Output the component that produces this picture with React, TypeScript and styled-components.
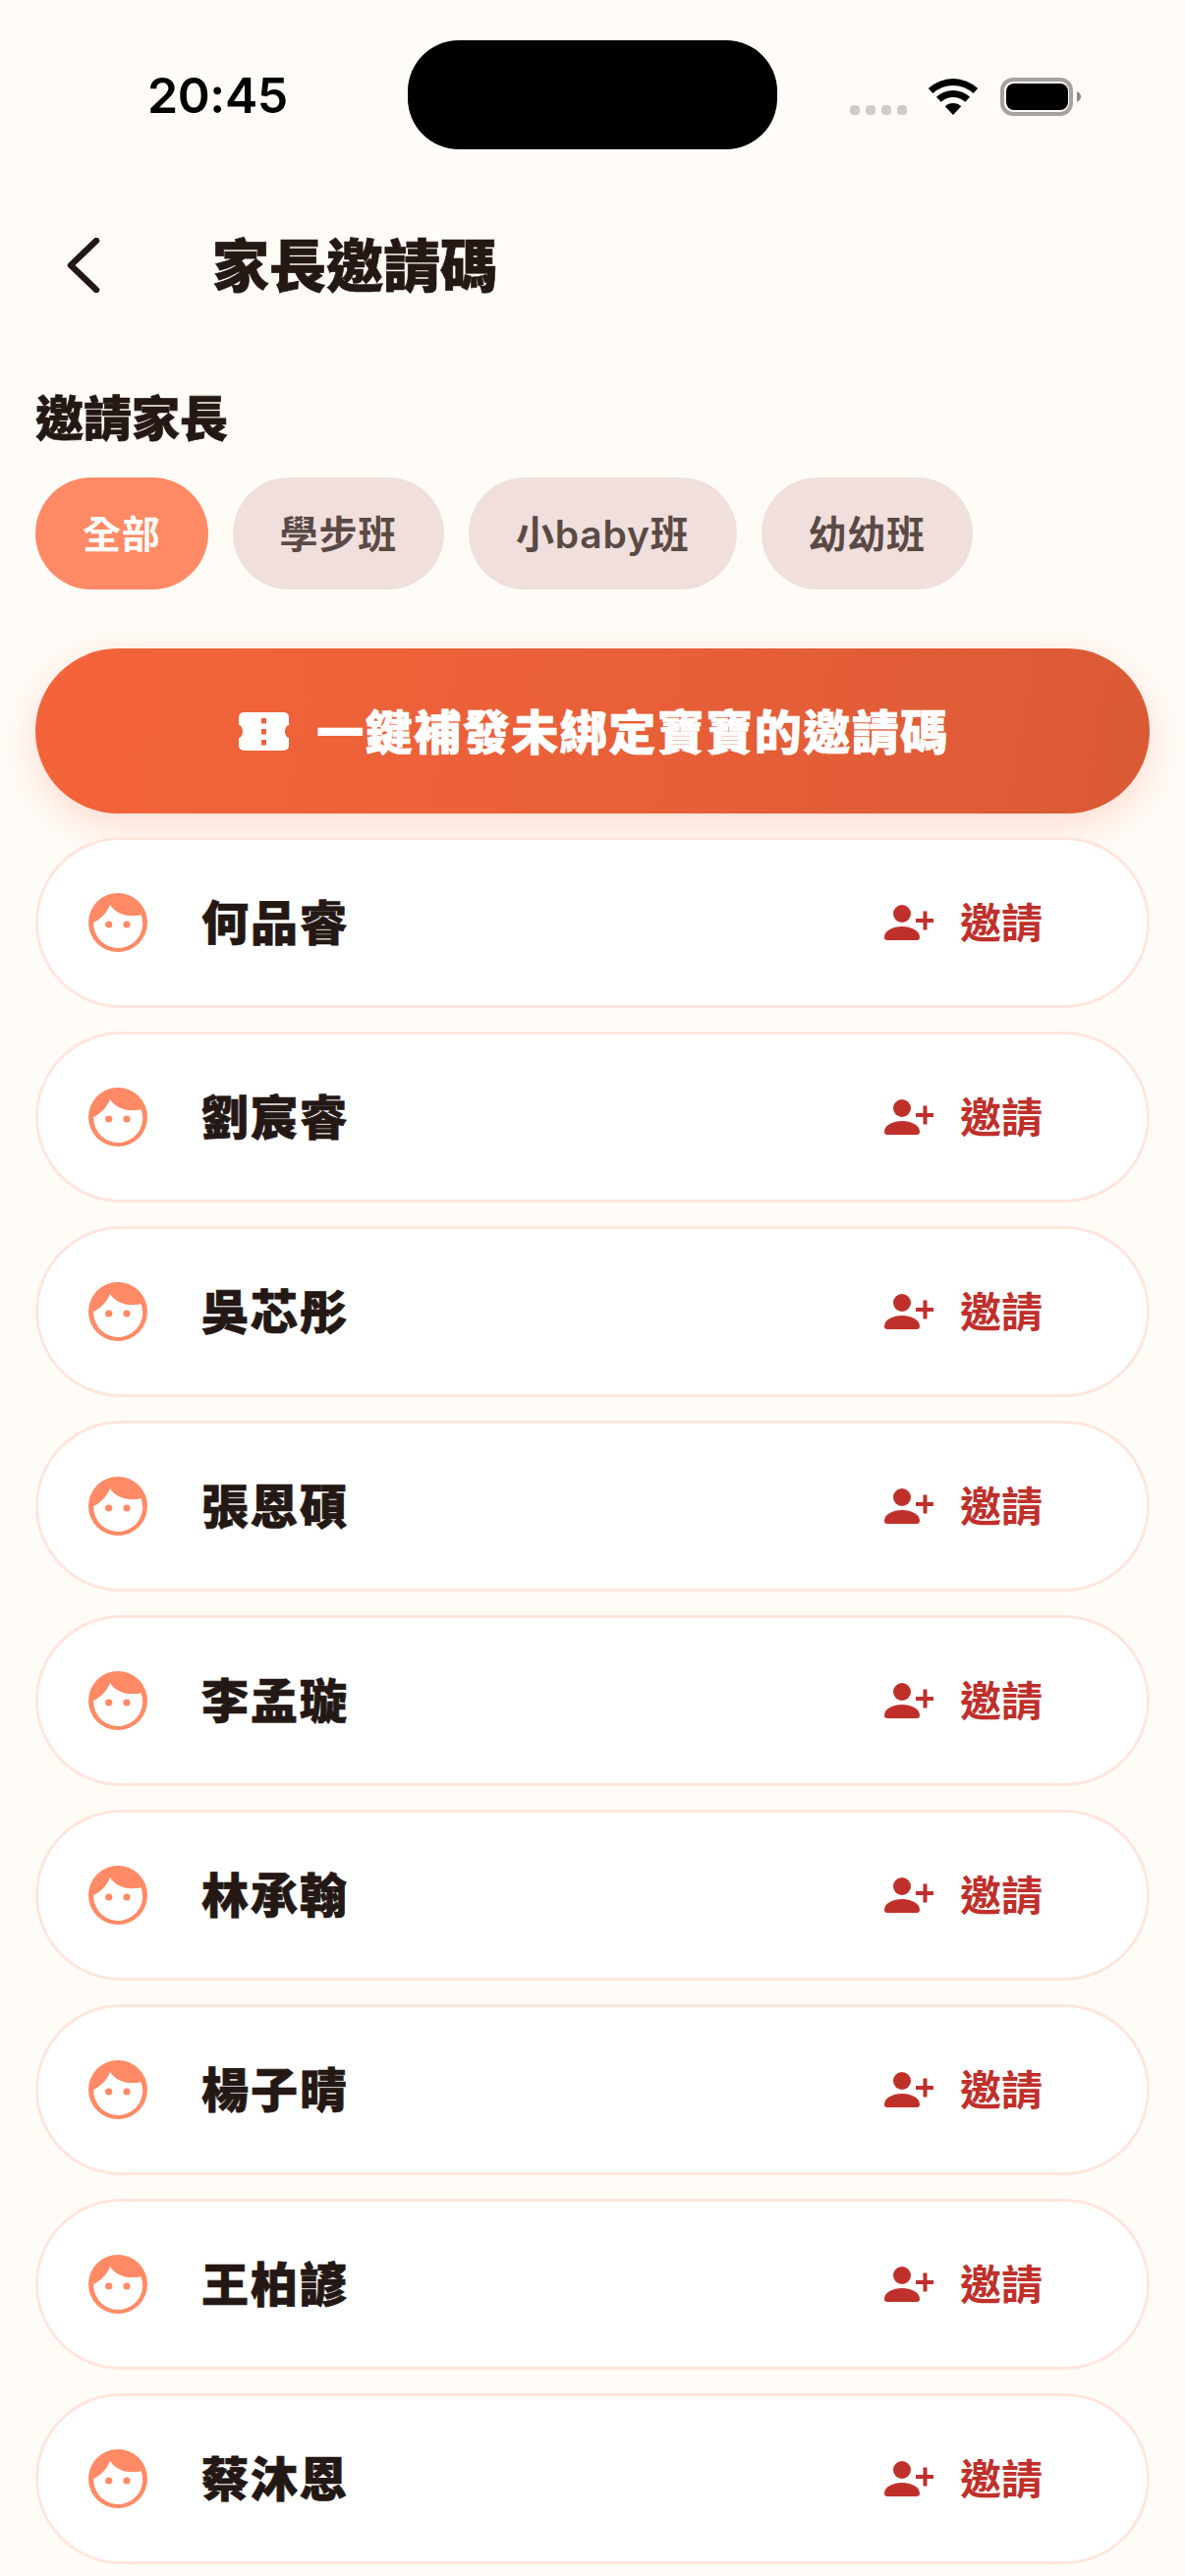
import React from "react";
import styled, { createGlobalStyle } from "styled-components";

const GlobalStyle = createGlobalStyle`
  html, body { margin: 0; padding: 0; background: #fffcf8; }
  body { font-family: Inter, "Noto Sans CJK TC", sans-serif; }
`;

const Page = styled.div`
  width: 1206px;
  height: 2622px;
  overflow: hidden;
  background: #fffcf8;
  box-sizing: border-box;
`;

const StatusBar = styled.div`
  display: grid;
  grid-template-columns: 265px 376px 1fr;
  align-items: center;
  height: 111px;
  padding: 41px 0 0 150px;
`;

const Time = styled.div`
  font-family: Inter, sans-serif;
  font-size: 50px;
  font-weight: 600;
  letter-spacing: -0.4px;
  line-height: 60px;
  color: #000;
`;

const Island = styled.div`
  height: 111px;
  border-radius: 52px;
  background: #000;
`;

const StatusIcons = styled.div`
  display: flex;
  align-items: flex-end;
  margin-left: 74px;
  height: 39px;
  margin-top: 3px;
`;

const Signal = styled.div`
  display: flex;
  gap: 6px;
  margin: 0 22px 1px 0;
`;

const SignalDot = styled.span`
  width: 10px;
  height: 10px;
  border-radius: 4px;
  background: #cfcbc8;
`;

const Wifi = styled.svg`
  width: 50px;
  height: 37px;
  margin: 0 23px 1px 0;
`;

const Battery = styled.svg`
  width: 82px;
  height: 39px;
`;

const Header = styled.div`
  display: flex;
  align-items: center;
  height: 236px;
  padding-left: 66px;
`;

const BackIcon = styled.svg`
  width: 36px;
  height: 56px;
`;

const Title = styled.h1`
  margin: 0 0 0 114px;
  padding-bottom: 6px;
  font-family: "Noto Sans CJK TC", sans-serif;
  font-size: 58px;
  font-weight: 900;
  line-height: 70px;
  -webkit-text-stroke: 0.7px currentColor;
  color: #241815;
`;

const Content = styled.div`
  padding: 0 36px;
`;

const SectionLabel = styled.h2`
  margin: 0 0 28px;
  font-family: "Noto Sans CJK TC", sans-serif;
  font-size: 49px;
  font-weight: 900;
  line-height: 70px;
  -webkit-text-stroke: 0.7px currentColor;
  color: #241815;
`;

const ChipRow = styled.div`
  display: flex;
  gap: 25px;
  margin-bottom: 60px;
`;

const Chip = styled.div<{ $active?: boolean }>`
  display: flex;
  align-items: center;
  box-sizing: border-box;
  height: 114px;
  padding: 0 48px 5px;
  border-radius: 57px;
  font-family: Inter, "Noto Sans CJK TC", sans-serif;
  font-size: 39px;
  font-weight: 600;
  letter-spacing: 0.8px;
  background: ${(p) => (p.$active ? "#ff8a65" : "#f0dfdc")};
  color: ${(p) => (p.$active ? "#ffffff" : "#5a4a46")};
`;

const PrimaryButton = styled.div`
  display: flex;
  align-items: center;
  justify-content: center;
  gap: 28px;
  height: 168px;
  padding-left: 3px;
  margin-bottom: 24px;
  border-radius: 84px;
  background: linear-gradient(100deg, #f4643a 0%, #e85f38 55%, #d95a35 100%);
  box-shadow: 0 12px 40px rgba(244, 100, 58, 0.22);
  font-family: "Noto Sans CJK TC", sans-serif;
  font-size: 48px;
  font-weight: 900;
  letter-spacing: 1.5px;
  -webkit-text-stroke: 0.7px currentColor;
  color: #fff;
`;

const ButtonLabel = styled.span`
  padding-bottom: 5px;
`;

const TicketIcon = styled.svg`
  width: 51px;
  height: 39px;
  flex: none;
`;

const StudentList = styled.div`
  display: flex;
  flex-direction: column;
  gap: 24px;
`;

const StudentCard = styled.div`
  display: flex;
  align-items: center;
  box-sizing: border-box;
  height: 174px;
  padding: 0 106px 0 51px;
  border: 3px solid #ffe6dc;
  border-radius: 87px;
  background: #fff;
`;

const Avatar = styled.svg`
  width: 60px;
  height: 60px;
  flex: none;
`;

const StudentName = styled.div`
  flex: 1;
  margin-left: 55px;
  padding-bottom: 6px;
  font-family: "Noto Sans CJK TC", sans-serif;
  font-size: 48px;
  font-weight: 900;
  letter-spacing: 2px;
  line-height: 60px;
  -webkit-text-stroke: 0.7px currentColor;
  color: #241815;
`;

const InviteAction = styled.div`
  display: flex;
  align-items: center;
  gap: 27px;
  font-family: "Noto Sans CJK TC", sans-serif;
  font-size: 42px;
  font-weight: 600;
  color: #c0302b;
`;

const InviteLabel = styled.span`
  padding-bottom: 6px;
`;

const PersonAdd = styled.svg`
  width: 50px;
  height: 36px;
`;

const students = ["何品睿", "劉宸睿", "吳芯彤", "張恩碩", "李孟璇", "林承翰", "楊子晴", "王柏諺", "蔡沐恩"];
const classes = ["全部", "學步班", "小baby班", "幼幼班"];

export default function App() {
  return (
    <Page>
      <GlobalStyle />
      <StatusBar>
        <Time>20:45</Time>
        <Island />
        <StatusIcons>
          <Signal>
            <SignalDot />
            <SignalDot />
            <SignalDot />
            <SignalDot />
          </Signal>
          <Wifi viewBox="0 0 50 37">
            <path d="M-0.2 10 A37 37 0 0 1 50.2 10 L45.5 15.1 A30 30 0 0 0 4.5 15.1 Z" fill="#000" />
            <path d="M7.95 18.7 A25 25 0 0 1 42.05 18.7 L37.3 23.8 A18 18 0 0 0 12.7 23.8 Z" fill="#000" />
            <path d="M16.8 28.2 A12 12 0 0 1 33.2 28.2 L25 37 Z" fill="#000" />
          </Wifi>
          <Battery viewBox="0 0 82 39">
            <rect x="2" y="2" width="70" height="35" rx="11" fill="none" stroke="#a8a19e" strokeWidth="4" />
            <rect x="6" y="6" width="63" height="27" rx="8" fill="#000" />
            <path d="M78 14 C81 15.5 82 17.5 82 19.5 C82 21.5 81 23.5 78 25 Z" fill="#8f8986" />
          </Battery>
        </StatusIcons>
      </StatusBar>

      <Header>
        <BackIcon viewBox="0 0 36 56">
          <path d="M32 3 L6 28 L32 53" fill="none" stroke="#241815" strokeWidth="6.5" strokeLinecap="round" strokeLinejoin="round" />
        </BackIcon>
        <Title>家長邀請碼</Title>
      </Header>

      <Content>
        <SectionLabel>邀請家長</SectionLabel>
        <ChipRow>
          {classes.map((c, i) => (
            <Chip key={c} $active={i === 0}>
              {c}
            </Chip>
          ))}
        </ChipRow>

        <PrimaryButton>
          <TicketIcon viewBox="0 0 51 39">
            <path
              fillRule="evenodd"
              fill="#fff"
              d="M5 0 H46 a5 5 0 0 1 5 5 V13 a4 6.5 0 0 0 0 13 V34 a5 5 0 0 1 -5 5 H5 a5 5 0 0 1 -5 -5 V26 a4 6.5 0 0 0 0 -13 V5 a5 5 0 0 1 5 -5 Z M23 6 v5.5 h5 v-5.5 Z M23 17 v5.5 h5 v-5.5 Z M23 28 v5.5 h5 v-5.5 Z"
            />
          </TicketIcon>
          <ButtonLabel>一鍵補發未綁定寶寶的邀請碼</ButtonLabel>
        </PrimaryButton>

        <StudentList>
          {students.map((name) => (
            <StudentCard key={name}>
              <Avatar viewBox="0 0 60 60">
                <circle cx="30" cy="30" r="30" fill="#ff8a65" />
                <path d="M5.2 30 C12 27 19 20 22 12 C27 20 37 24 47 23 C50 23 53 22.5 53.5 22 A25 25 0 1 1 5.2 30 Z" fill="#fff" />
                <circle cx="20.7" cy="32" r="3.6" fill="#ff8a65" />
                <circle cx="39" cy="32" r="3.6" fill="#ff8a65" />
              </Avatar>
              <StudentName>{name}</StudentName>
              <InviteAction>
                <PersonAdd viewBox="0 0 50 36">
                  <circle cx="18" cy="9" r="9" fill="#c0302b" />
                  <path d="M0 33 C0 26 9 22 18 22 C27 22 36 26 36 33 a3 3 0 0 1 -3 3 H3 a3 3 0 0 1 -3 -3 Z" fill="#c0302b" />
                  <path d="M32 14 h7.5 v-7.5 h4 v7.5 h6.5 v4 h-6.5 v7.5 h-4 v-7.5 h-7.5 Z" fill="#c0302b" />
                </PersonAdd>
                <InviteLabel>邀請</InviteLabel>
              </InviteAction>
            </StudentCard>
          ))}
        </StudentList>
      </Content>
    </Page>
  );
}
